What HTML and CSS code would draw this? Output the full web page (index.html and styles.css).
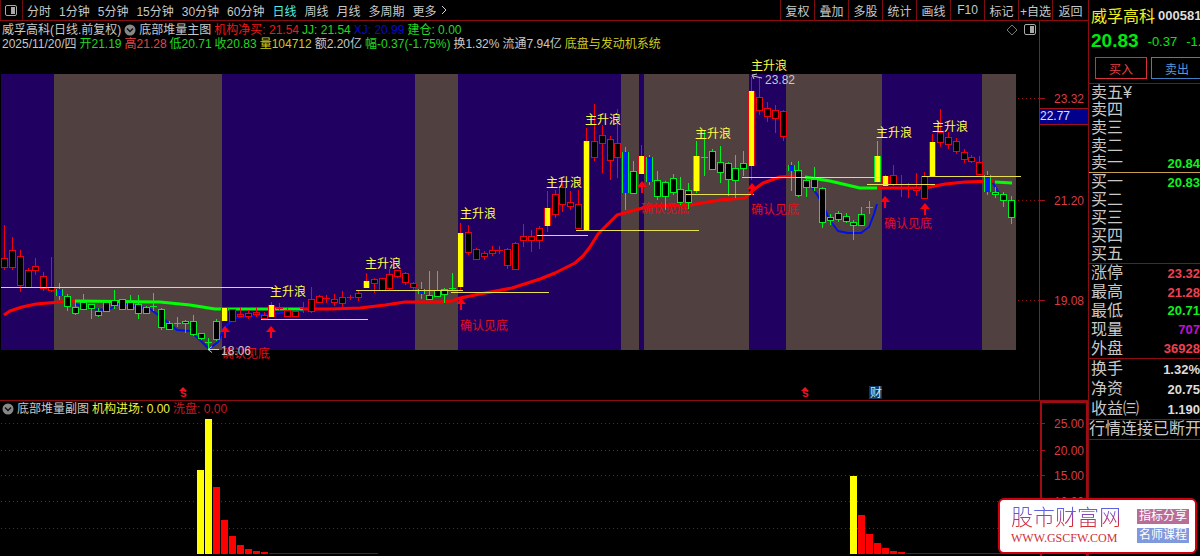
FILE: index.html
```html
<!DOCTYPE html>
<html lang="zh-CN">
<head>
  <meta charset="UTF-8">
  <meta name="viewport" content="width=device-width, initial-scale=1.0">
  <title>威孚高科 日线</title>
  <link rel="stylesheet" href="styles.css">
</head>
<body>
  <main class="main">
    <!-- toolbar -->
    <nav class="toolbar">
      <button class="panel-toggle" aria-label="侧栏">
        <svg width="12" height="11" viewBox="0 0 12 11"><rect x=".5" y=".5" width="11" height="10" rx="1.5" fill="none" stroke="#aaa"/><rect x="6" y="2" width="4" height="7" fill="#aaa"/></svg>
      </button>
      <div class="periods">
        <button>分时</button>
        <button>1分钟</button>
        <button>5分钟</button>
        <button>15分钟</button>
        <button>30分钟</button>
        <button>60分钟</button>
        <button class="active">日线</button>
        <button>周线</button>
        <button>月线</button>
        <button>多周期</button>
        <button class="more">更多
          <svg width="6" height="10" viewBox="0 0 6 10"><path d="M1 1l4 4-4 4" fill="none" stroke="#ccc"/></svg>
        </button>
      </div>
      <div class="tools">
        <button>复权</button>
        <button>叠加</button>
        <button>多股</button>
        <button>统计</button>
        <button>画线</button>
        <button>F10</button>
        <button>标记</button>
        <button>+自选</button>
        <button>返回</button>
      </div>
    </nav>

    <!-- main chart -->
    <section class="pane">
      <div class="plot">
        <div class="info">
          <span>威孚高科(日线.前复权)</span>
          <svg class="chevron" width="12" height="12" viewBox="0 0 12 12"><circle cx="6" cy="6" r="5.5" fill="#888"/><path d="M3 4.5l3 3 3-3" fill="none" stroke="#111" stroke-width="1.5"/></svg>
          <span>底部堆量主图</span>
          <span class="red">机构净买: 21.54</span>
          <span class="green">JJ: 21.54</span>
          <span class="blue">XJ: 20.99</span>
          <span class="green">建仓: 0.00</span>
          <span class="corner">
            <svg width="12" height="12" viewBox="0 0 12 12"><path d="M6 1l5 5-5 5-5-5z" fill="none" stroke="#777"/></svg>
            <svg width="12" height="11" viewBox="0 0 12 11"><rect x=".5" y=".5" width="11" height="10" rx="1.5" fill="none" stroke="#aaa"/><rect x="6" y="2" width="4" height="7" fill="#aaa"/></svg>
          </span>
        </div>
        <div class="info">
          <span>2025/11/20/四</span>
          <span class="green">开21.19</span>
          <span class="soft-red">高21.28</span>
          <span class="green">低20.71</span>
          <span class="green">收20.83</span>
          <span class="gold">量104712</span>
          <span>额2.20亿</span>
          <span class="green">幅-0.37(-1.75%)</span>
          <span>换1.32%</span>
          <span>流通7.94亿</span>
          <span class="gold">底盘与发动机系统</span>
        </div>
        <svg class="chart" id="kline" height="349" viewBox="0 51 1039 349" preserveAspectRatio="xMaxYMin meet"></svg>
      </div>
      <svg class="axis" width="49" height="379" viewBox="1039 21 49 379">
        <path class="tick" d="M1039.5 21v379M1040 98.5h5M1040 200.5h5M1040 300.5h5"/>
        <rect x="1040" y="108" width="49" height="16" fill="#00008c"/>
        <path class="tick" d="M1040 108.5h49M1040 124.5h49"/>
        <g class="scale">
          <text x="1084" y="103">23.32</text>
          <text x="1084" y="205">21.20</text>
          <text x="1084" y="305">19.08</text>
        </g>
        <text x="1040" y="120" class="cursor-price">22.77</text>
      </svg>
    </section>

    <!-- sub chart -->
    <section class="pane sub">
      <div class="plot">
        <div class="info">
          <svg class="chevron" width="12" height="12" viewBox="0 0 12 12"><circle cx="6" cy="6" r="5.5" fill="#888"/><path d="M3 4.5l3 3 3-3" fill="none" stroke="#111" stroke-width="1.5"/></svg>
          <span>底部堆量副图</span>
          <span class="yellow">机构进场: 0.00</span>
          <span class="dark-red">洗盘: 0.00</span>
        </div>
        <svg class="chart" id="volume" height="140" viewBox="0 416 1039 140" preserveAspectRatio="xMaxYMin meet"></svg>
      </div>
      <svg class="axis" width="49" height="155" viewBox="1039 401 49 155">
        <path d="M1041 556V402h46v154" fill="none" stroke="#a00c14" stroke-width="2"/>
        <path class="tick" d="M1040 423.5h5M1040 450.5h5M1040 475.5h5M1040 501.5h5M1040 528.5h5"/>
        <g class="scale">
          <text x="1084" y="428">25.00</text>
          <text x="1084" y="455">20.00</text>
          <text x="1084" y="480">15.00</text>
          <text x="1084" y="506">10.00</text>
        </g>
      </svg>
    </section>
  </main>

  <!-- quote panel -->
  <aside class="quote">
    <header class="stock">
      <div class="title"><h1>威孚高科</h1><span class="code">000581</span></div>
      <div class="last"><strong>20.83</strong><span>-0.37</span><span>-1.75%</span></div>
      <div class="trade"><button class="buy">买入</button><button class="sell">卖出</button></div>
    </header>
    <dl class="rows asks">
      <div><dt>卖五¥</dt><dd></dd></div>
      <div><dt>卖四</dt><dd></dd></div>
      <div><dt>卖三</dt><dd></dd></div>
      <div><dt>卖二</dt><dd></dd></div>
      <div><dt>卖一</dt><dd class="down">20.84</dd></div>
    </dl>
    <dl class="rows bids">
      <div><dt>买一</dt><dd class="down">20.83</dd></div>
      <div><dt>买二</dt><dd></dd></div>
      <div><dt>买三</dt><dd></dd></div>
      <div><dt>买四</dt><dd></dd></div>
      <div><dt>买五</dt><dd></dd></div>
    </dl>
    <dl class="rows stats">
      <div><dt>涨停</dt><dd class="up">23.32</dd></div>
      <div><dt>最高</dt><dd class="up">21.28</dd></div>
      <div><dt>最低</dt><dd class="down">20.71</dd></div>
      <div><dt>现量</dt><dd class="now">707</dd></div>
      <div><dt>外盘</dt><dd class="up">36928</dd></div>
    </dl>
    <dl class="rows base">
      <div><dt>换手</dt><dd>1.32%</dd></div>
      <div><dt>净资</dt><dd>20.75</dd></div>
      <div><dt>收益㈢</dt><dd>1.190</dd></div>
    </dl>
    <p class="notice">行情连接已断开</p>
  </aside>

  <!-- site badge -->
  <div class="badge">
    <div class="site">
      <div class="site-name">股市财富网</div>
      <div class="site-url">WWW.GSCFW.COM</div>
    </div>
    <div class="tags">
      <span class="tag pink">指标分享</span>
      <span class="tag violet">名师课程</span>
    </div>
  </div>

  <script src="script.js"></script>
</body>
</html>
```

FILE: styles.css
```css
* {
  margin: 0;
  padding: 0;
  box-sizing: border-box;
}
body {
  position: relative;
  display: flex;
  min-height: 100vh;
  overflow: hidden;
  background: #000;
  color: #c8c8c8;
  font-family: "Liberation Sans", "Noto Sans CJK SC", sans-serif;
  font-size: 12px;
}
button {
  background: none;
  border: none;
  color: inherit;
  font: inherit;
  cursor: pointer;
  white-space: nowrap;
}
svg {
  display: block;
  flex: none;
}
.main {
  flex: 1;
  min-width: 0;
}

/* ===== Toolbar ===== */
.toolbar {
  display: flex;
  height: 21px;
  border-bottom: 1px solid #8c0c12;
}
.panel-toggle {
  width: 23px;
  padding-left: 4px;
  border-left: 1px solid #6c0c10;
  border-right: 1px solid #6c0c10;
}
.periods {
  display: flex;
  flex: 1;
  gap: 8px;
  padding-left: 4px;
}
.periods .active {
  color: #50f0e0;
}
.more {
  display: flex;
  align-items: center;
  gap: 4px;
}
.tools {
  display: flex;
}
.tools button {
  width: 34px;
  border-left: 1px solid #7c0c10;
}
.tools button:last-child {
  width: 36px;
}

/* ===== Chart panes ===== */
.pane {
  display: flex;
  border-bottom: 1px solid #8c0c12;
}
.sub {
  border-bottom: none;
}
.plot {
  flex: 1;
  min-width: 0;
  padding-top: 1px;
}
.pane:not(.sub) .plot {
  padding-top: 2px;
}
.info {
  display: flex;
  align-items: center;
  gap: 3px;
  height: 14px;
  padding-left: 2px;
  line-height: 14px;
  white-space: nowrap;
}
.corner {
  display: flex;
  gap: 6px;
  margin-left: auto;
  padding-right: 3px;
}
.chart {
  width: 100%;
}
.tick {
  fill: none;
  stroke: #a01018;
}
.scale {
  fill: #d83c44;
  text-anchor: end;
}
.cursor-price {
  fill: #e0e0ff;
}

.red { color: #f01818; }
.soft-red { color: #e04848; }
.dark-red { color: #c81820; }
.green { color: #20d820; }
.blue { color: #0808d0; }
.gold { color: #cccc20; }
.yellow { color: #f0f040; }

/* ===== Candles ===== */
.wave { fill: #ffff40; }
.bottom { fill: #e01020; }
.extreme { fill: #c8c8c8; }
.grid {
  stroke: #8c1414;
  stroke-dasharray: 1 3;
}
.news {
  fill: #c0e8ff;
}
.mark {
  fill: #f01020;
  font-weight: bold;
}

/* ===== Quote panel ===== */
.quote {
  width: 112px;
  overflow: hidden;
  border-left: 1px solid #8c0c12;
  white-space: nowrap;
}
.stock {
  height: 84px;
  padding: 5px 0 0 2px;
  border-bottom: 1px solid #8c0c12;
}
.title,
.last,
.trade {
  display: flex;
  align-items: center;
}
.title {
  gap: 3px;
  height: 20px;
}
.title h1 {
  color: #f0f020;
  font-size: 16px;
  font-weight: normal;
}
.code {
  color: #ddd;
  font-size: 13px;
  font-weight: bold;
}
.last {
  gap: 9px;
  height: 32px;
  color: #00e810;
  font-size: 13px;
}
.last strong {
  font-size: 19px;
}
.trade {
  gap: 4px;
  padding-left: 4px;
}
.trade button {
  flex: none;
  width: 52px;
  height: 22px;
  border: 1px solid #d83038;
  color: #e84048;
}
.trade .sell {
  border-color: #4080c0;
  color: #5898d8;
}
.rows {
  display: flex;
  flex-direction: column;
  border-bottom: 1px solid #8c0c12;
}
.rows div {
  display: flex;
  flex: 1;
  align-items: center;
  justify-content: space-between;
  padding-left: 2px;
}
.rows dt,
.notice {
  font-size: 16px;
  line-height: 16px;
}
.rows dd {
  color: #ddd;
  font-size: 13px;
  font-weight: bold;
}
.asks {
  height: 89px;
  border-color: #c8a050;
}
.bids { height: 91px; }
.stats { height: 95px; }
.base { height: 61px; }
.notice {
  padding: 1px 0 2px;
  border-bottom: 1px solid #8c0c12;
}
.rows .down { color: #10f020; }
.rows .up { color: #f04050; }
.rows .now { color: #c010d0; }

/* ===== Site badge ===== */
.badge {
  position: absolute;
  right: 3px;
  bottom: 2px;
  display: flex;
  align-items: center;
  justify-content: space-between;
  width: 199px;
  height: 56px;
  padding: 0 6px 0 11px;
  background: #fff;
  border: 2px solid #d00010;
  border-radius: 6px;
}
.site-name {
  background: linear-gradient(#6060e0 20%, #b03080 55%, #d03030 80%);
  background-clip: text;
  -webkit-background-clip: text;
  color: transparent;
  font-size: 22px;
  font-weight: 300;
  line-height: 24px;
}
.site-url {
  color: #d03038;
  font-family: "Liberation Serif", serif;
  line-height: 16px;
}
.tags {
  display: flex;
  flex-direction: column;
  gap: 4px;
}
.tag {
  padding: 0 2px;
  color: #fff;
  line-height: 15px;
}
.pink { background: #b86c98; }
.violet { background: #8098dc; }
```

FILE: script.js
```js
const STEP = 7.865;
const X0 = 4;
const COLORS = { r: '#f00010', g: '#00f020' };

// fill + wick colour, high, body top, body bottom, low
// fill: k = hollow, y = yellow, b = blue
const candles = `
kr 225 258 267 270|kr 237 250 267 270|kr 250 256 285 292|kr 268 270 287 288|kr 258 266 270 275
kr 272 276 288 291|kr 257 287 290 292|bg 283 289 296 300|kg 294 296 306 311|kg 302 307 313 315
kg 294 302 309 310|kg 304 304 308 319|kg 308 311 315 317|kg 301 302 311 312|kg 290 300 305 309
kg 299 299 309 310|kg 295 302 309 310|kg 295 304 313 319|kg 306 307 313 314|kg 293 306 307 311
kg 308 309 327 330|kg 321 323 329 330|kg 317 323 324 327|kg 320 321 323 333|kg 315 321 334 336
kg 333 333 338 340|kg 338 342 343 349|kg 319 321 339 341|yr 308 308 321 321|kr 309 309 321 322
kr 307 314 316 317|kr 310 313 316 319|kr 307 312 314 317|kr 312 315 318 319|yr 302 305 317 317
kr 303 308 309 311|kr 308 310 316 317|kr 310 311 316 317|kr 302 308 309 313|kr 287 299 311 313
kr 295 296 302 303|kr 295 298 299 303|kr 294 299 302 306|kr 291 297 303 307|kr 295 297 298 300
kr 290 293 297 301|yr 273 281 288 288|kr 278 279 283 293|kr 278 278 290 290|kr 269 274 288 290
kr 270 270 276 278|kr 272 273 282 285|kr 282 283 287 290|bg 282 289 294 299|kg 271 295 299 300
kg 271 290 296 297|kg 288 289 294 303|kg 273 288 289 291|yr 223 233 287 290|kr 225 232 252 255
kr 248 249 259 260|kr 251 253 256 260|kr 246 250 253 256|kr 246 250 251 254|kr 248 249 265 269
kr 242 243 269 269|kr 224 236 240 247|kr 230 236 240 252|kr 226 228 240 249|yr 191 208 226 232
kr 190 194 214 218|kr 184 187 204 212|kr 191 202 206 210|kr 190 204 228 229|yr 128 141 230 230
kr 104 141 157 161|kr 125 135 143 173|kr 136 139 160 180|kr 109 143 157 178|bg 147 152 193 210
kg 161 171 193 194|yr 145 156 174 174|bg 155 157 182 185|kg 171 180 196 200|kg 181 182 196 210
kg 174 178 192 195|kg 177 189 202 205|kg 183 190 202 209|yg 141 156 191 193|kg 131 157 158 176
kg 149 151 169 169|kg 146 162 172 183|kg 162 163 179 196|kg 155 168 180 198|kg 151 163 168 176
yr 77 91 166 180|kr 77 97 110 115|kr 102 108 116 122|kr 105 110 118 133|kr 110 111 136 141
bg 162 165 171 191|kg 161 170 195 197|kg 179 180 187 197|kg 167 179 187 191|kg 187 188 222 228
kg 214 217 220 225|kg 211 213 219 222|kg 213 216 221 223|kg 220 222 225 240|kg 207 214 225 226
kg 201 207 208 214|yg 141 156 182 182|yr 175 176 186 186|kr 165 175 184 186|kr 175 187 188 197
kr 183 187 188 198|kr 173 188 190 196|kr 172 176 198 199|yr 134 142 176 177|kr 109 132 142 147
kr 132 137 144 149|kr 138 141 151 154|kr 149 152 159 163|kr 155 157 161 163|kr 156 162 174 175
bg 171 175 192 195|kg 187 192 194 198|kg 192 194 200 207|kg 196 200 217 224
`.trim().split(/[|\n]/).map(s => s.split(' '));

// background bands: start x, end x, strong trend or not
const bands = [
  [1, 54, 1], [54, 222, 0], [222, 415, 1], [415, 458, 0], [458, 621, 1], [621, 639, 0],
  [639, 644, 1], [644, 749, 0], [749, 786, 1], [786, 882, 0], [882, 982, 1], [982, 1016, 0]
];

const lines = [
  ['blue', '75,304 90,309 108,310 120,303 150,309 165,320 177,330 190,331 200,340 209,349 218,342 224,328 235,318 260,315 303,311'],
  ['blue', '812,187 818,196 823,205 829,219 838,231 848,233 861,233 869,227 874,214 877,204'],
  ['blue', '993,183 1003,200'],
  ['red', '4,315 10,311 22,307 36,304 60,302 75,301'],
  ['green', '75,301 160,302 190,305 215,309 250,309 303,309'],
  ['red', '303,309 330,309 360,308 385,305 405,302 440,302 452,301 460,298 480,294 512,288 540,279 555,273 575,263 583,256 590,247 598,234 617,215 650,206 690,205 720,200 745,198 752,191 763,183 780,177 800,176'],
  ['green', '805,177 830,181 860,188 877,188'],
  ['red', '877,188 925,188 945,184 965,182 993,181'],
  ['green', '995,182 1012,183']
];

// breakout levels: x1, x2, y
const levels = [
  [1, 273, 287], [261, 368, 319], [356, 463, 290], [451, 549, 292], [537, 588, 235],
  [576, 699, 230], [686, 754, 194], [742, 880, 177], [867, 935, 184], [922, 1021, 176]
];

const waves = [[270, 296], [365, 268], [460, 218], [546, 187], [585, 124], [695, 138], [751, 70], [876, 137], [932, 131]];
const bottoms = [[222, 358], [460, 330], [641, 213], [751, 214], [884, 228]];
const arrows = [[225, 326], [271, 326], [461, 298], [642, 181], [752, 183], [885, 196], [925, 203]];

const stroke = { red: '#ff0000', green: '#00ff00', blue: '#0010e8' };

function drawKline() {
  let s = '';
  s += '<path class="grid" d="M1018 98.5h21M1018 200.5h21M1018 300.5h21"/>';
  bands.forEach(([a, b, strong]) => {
    s += `<rect x="${a}" y="74" width="${b - a}" height="276" fill="${strong ? '#200060' : '#504040'}" shape-rendering="crispEdges"/>`;
  });
  lines.forEach(([c, pts]) => {
    s += `<polyline points="${pts}" fill="none" stroke="${stroke[c]}" stroke-width="${c === 'blue' ? 2 : 3}" stroke-linejoin="round"/>`;
  });
  candles.forEach(([type, high, top, bottom, low], i) => {
    const x = Math.round(X0 + i * STEP);
    const c = COLORS[type[1]];
    const h = bottom - top;
    s += `<path d="M${x + .5} ${high}V${low}" stroke="${c}"/>`;
    if (type[0] === 'k') {
      s += h < 2
        ? `<path d="M${x - 3} ${+top + .5}h7" stroke="${c}"/>`
        : `<rect x="${x - 2.5}" y="${+top + .5}" width="6" height="${h}" fill="#000" stroke="${c}"/>`;
    } else {
      s += `<rect x="${x - 3}" y="${top}" width="7" height="${h}" fill="${c}"/>`;
      s += `<rect x="${x - 2}" y="${top}" width="5" height="${h}" fill="${type[0] === 'y' ? '#ffff00' : '#0020ff'}"/>`;
    }
  });
  levels.forEach(([a, b, y]) => {
    s += `<path d="M${a} ${y + .5}H${b}" stroke="#e8e050"/>`;
  });
  arrows.forEach(([x, y]) => {
    s += `<path d="M${x} ${y}l5 6h-4v6h-2v-6h-4z" fill="#ff0010"/>`;
  });
  bottoms.forEach(([x, y]) => {
    s += `<text class="bottom" x="${x}" y="${y}">确认见底</text>`;
  });
  waves.forEach(([x, y]) => {
    s += `<text class="wave" x="${x}" y="${y}">主升浪</text>`;
  });
  // lowest and highest price
  s += '<path d="M219 349.5H208m4-3l-4 3 4 3M762 78l-9-2m4-2l-5 1 2 4" fill="none" stroke="#ccc"/>';
  s += '<text class="extreme" x="221" y="355">18.06</text><text class="extreme" x="765" y="84">23.82</text>';
  // event marks
  [183, 805].forEach(x => {
    s += `<path d="M${x} 387l4 4h-8z" fill="#f01020"/><text class="mark" x="${x - 3}" y="397">s</text>`;
  });
  s += '<rect x="869" y="386" width="13" height="13" fill="#10385c"/><text class="news" x="870" y="397">财</text>';
  document.getElementById('kline').innerHTML = s;
}

function drawVolume() {
  let s = '<path class="grid" d="M1 423.5h1038M1 450.5h1038M1 475.5h1038M1 501.5h1038M1 528.5h1038"/>';
  const groups = [
    [25, [470, 419, 487, 520, 536, 545, 549, 551, 552], 378],
    [108, [476, 515, 534, 543, 548, 551, 552], 1039]
  ];
  groups.forEach(([start, tops, end], g) => {
    tops.forEach((y, i) => {
      const x = Math.round(X0 + start * STEP - 3.5) + i * 8;
      const yellow = i < 2 - g;
      s += `<rect x="${x}" y="${y}" width="7" height="${554 - y}" fill="${yellow ? '#ffff00' : '#ff0000'}"/>`;
    });
    const tail = Math.round(X0 + start * STEP - 3.5) + tops.length * 8;
    s += `<path d="M${tail} 553.5H${end}" stroke="#a00000"/>`;
  });
  document.getElementById('volume').innerHTML = s;
}

drawKline();
drawVolume();
```
